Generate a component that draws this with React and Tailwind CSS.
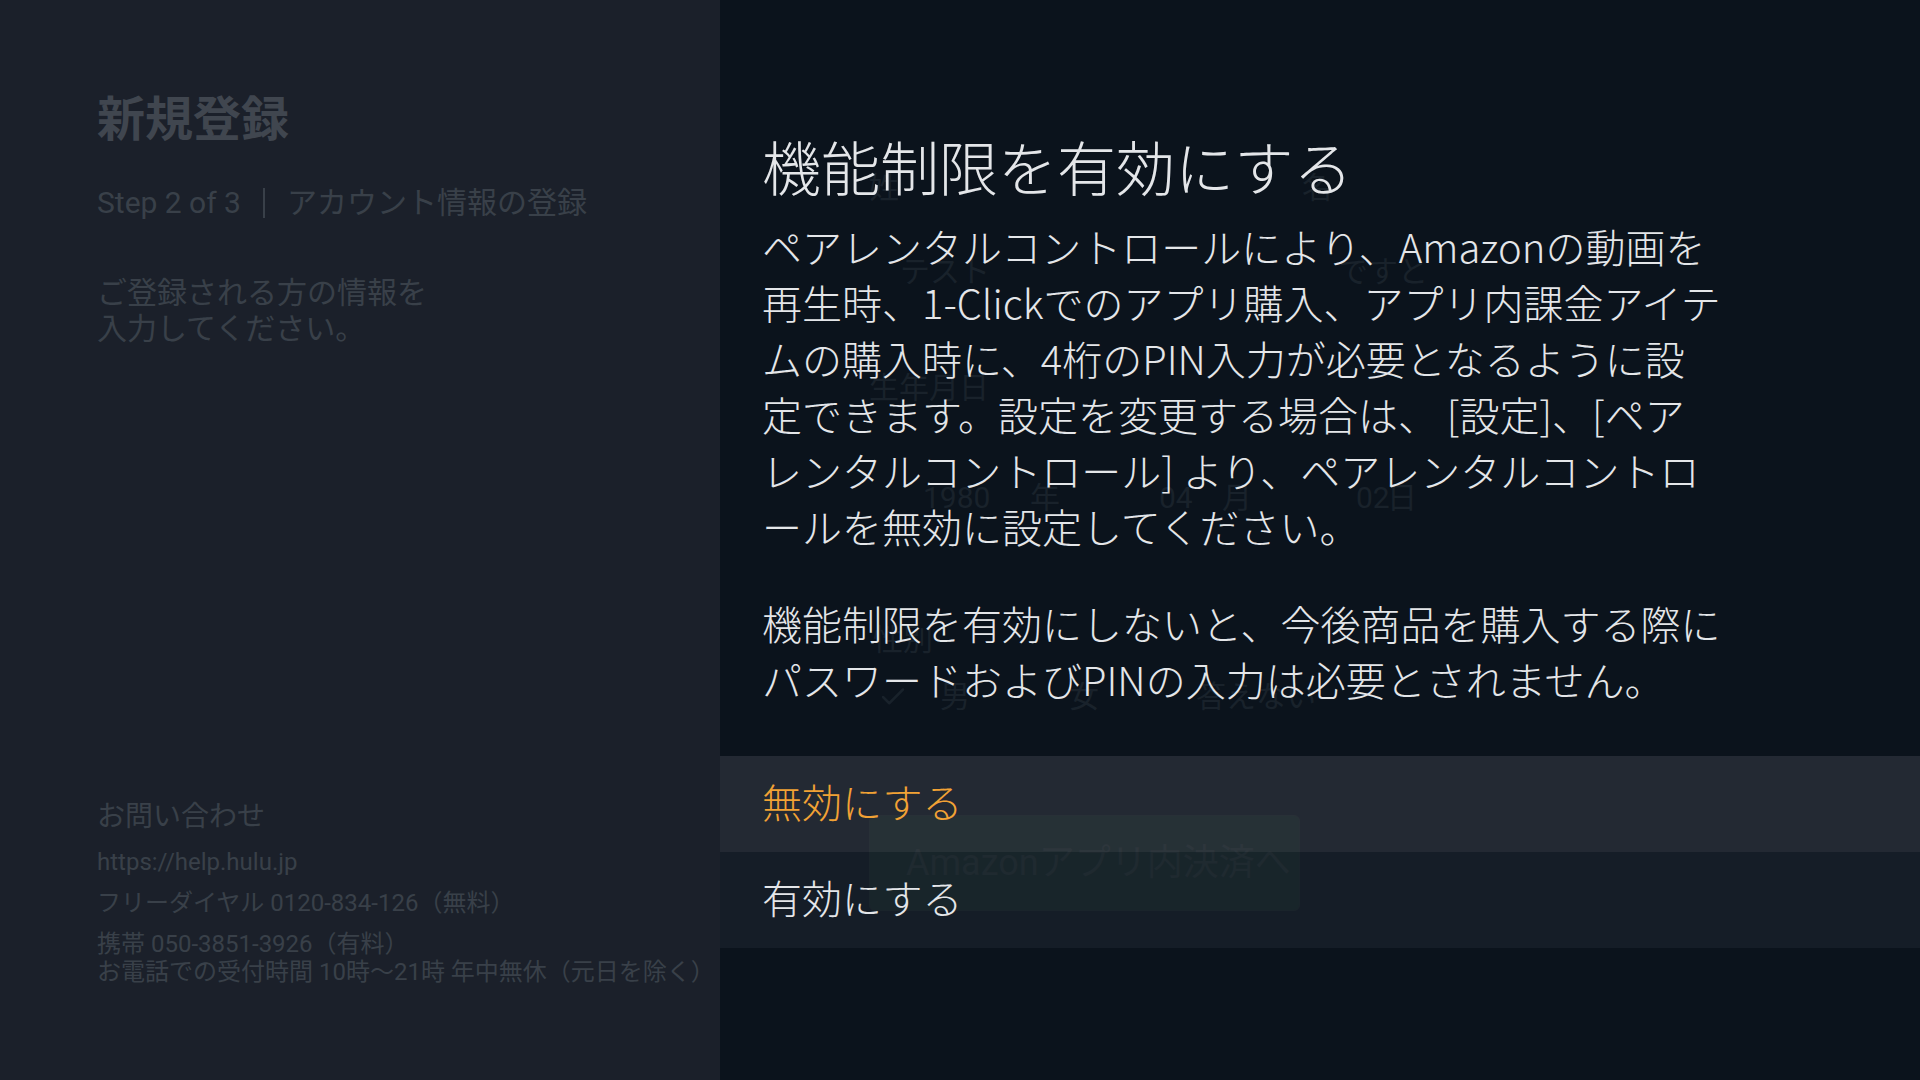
import React from 'react'
import { Check } from 'lucide-react'

const contact = [
    'https://help.hulu.jp',
    'フリーダイヤル 0120-834-126（無料）',
]

const bodyLines = [
    'ペアレンタルコントロールにより、Amazonの動画を',
    '再生時、1-Clickでのアプリ購入、アプリ内課金アイテ',
    'ムの購入時に、4桁のPIN入力が必要となるように設',
    '定できます。設定を変更する場合は、 [設定]、[ペア',
    'レンタルコントロール] より、ペアレンタルコントロ',
    'ールを無効に設定してください。',
]

const noteLines = [
    '機能制限を有効にしないと、今後商品を購入する際に',
    'パスワードおよびPINの入力は必要とされません。',
]

function SignupPanel() {
    return (
        <aside className="w-[720px] shrink-0 bg-[#1b202a] pl-[97px] pt-[92px] font-['Roboto','Noto_Sans_CJK_JP',sans-serif] text-[#394049]">
            <h1 className="text-[48px] leading-[56px] font-bold text-[#40464f]">新規登録</h1>
            <div className="mt-[35px] flex items-center text-[30px] leading-[40px]">
                <span>Step 2 of 3</span>
                <span className="mx-[22px] h-[30px] w-[2px] bg-[#394049]"></span>
                <span>アカウント情報の登録</span>
            </div>
            <p className="mt-[52px] text-[30px] leading-[36px]">
                ご登録される方の情報を<br />入力してください。
            </p>

            <div className="mt-[452px]">
                <div className="text-[28px] leading-[36px]">お問い合わせ</div>
                {contact.map((line, i) => (
                    <div key={i} className="mt-[13px] text-[24px] leading-[28px]">{line}</div>
                ))}
                <div className="mt-[13px] text-[24px] leading-[28px] whitespace-nowrap">
                    携帯 050-3851-3926（有料）<br />
                    お電話での受付時間 10時〜21時 年中無休（元日を除く）
                </div>
            </div>
        </aside>
    )
}

// the form that sits behind the dialog, almost hidden
function HiddenForm() {
    return (
        <div className="flex flex-col pl-[149px] pt-[168px] font-['Roboto','Noto_Sans_CJK_JP',sans-serif] text-[#19222b]">
            <div className="flex text-[30px] leading-[40px]">
                <span className="w-[433px]">姓</span>
                <span>名</span>
            </div>
            <div className="mt-[44px] flex text-[30px] leading-[40px]">
                <span className="w-[433px] pl-[31px]">テスト</span>
                <span className="pl-[36px]">ですと</span>
            </div>
            <div className="mt-[76px] text-[30px] leading-[40px]">生年月日</div>
            <div className="mt-[70px] flex text-[30px] leading-[40px]">
                <span className="w-[54px]"></span>
                <span className="w-[107px]">1980</span>
                <span className="w-[129px]">年</span>
                <span className="w-[63px]">04</span>
                <span className="w-[134px]">月</span>
                <span className="w-[31px]">02</span>
                <span>日</span>
            </div>
            <div className="mt-[102px] pl-[4px] text-[30px] leading-[40px]">性別</div>
            <div className="mt-[17px] flex items-center text-[30px] leading-[40px]">
                <span className="w-[9px]"></span>
                <span className="w-[62px]"><Check size={30} strokeWidth={2} className="text-[#19222b]" /></span>
                <span className="w-[129px]">男</span>
                <span className="w-[127px]">女</span>
                <span>答えない</span>
            </div>
            <div className="mt-[98px] flex h-[96px] w-[431px] items-center rounded-md border border-[#1f2d2c] bg-[#16302a] pl-[36px] text-[36px] text-[#334340]">
                Amazonアプリ内決済へ
            </div>
        </div>
    )
}

function ParentalDialog() {
    return (
        <div className="absolute inset-0 flex flex-col font-['Noto_Sans_CJK_JP',sans-serif] font-light text-[#e4e6e9]">
            <div className="pl-[42px] pt-[131px]">
                <h2 className="text-[59px] leading-[70px]">機能制限を有効にする</h2>
                <p className="mt-[17px] text-[40px] leading-[56px] whitespace-nowrap">
                    {bodyLines.map((line, i) => (
                        <span key={i} className="block">{line}</span>
                    ))}
                </p>
                <p className="mt-[41px] text-[40px] leading-[56px] whitespace-nowrap">
                    {noteLines.map((line, i) => (
                        <span key={i} className="block">{line}</span>
                    ))}
                </p>
            </div>
            <div className="mt-[49px] flex flex-col">
                <div className="flex h-[96px] items-center bg-[#2c323b]/75 pb-[7px] pl-[42px] text-[40px] text-[#f2a235]">無効にする</div>
                <div className="flex h-[96px] items-center bg-[#1a222b]/75 pb-[7px] pl-[42px] text-[40px]">有効にする</div>
            </div>
        </div>
    )
}

export default function App() {
    return (
        <div className="flex h-[1080px] w-[1920px] overflow-hidden">
            <SignupPanel />
            <main className="relative flex-1 bg-[#0b131c]">
                <HiddenForm />
                <ParentalDialog />
            </main>
        </div>
    )
}
